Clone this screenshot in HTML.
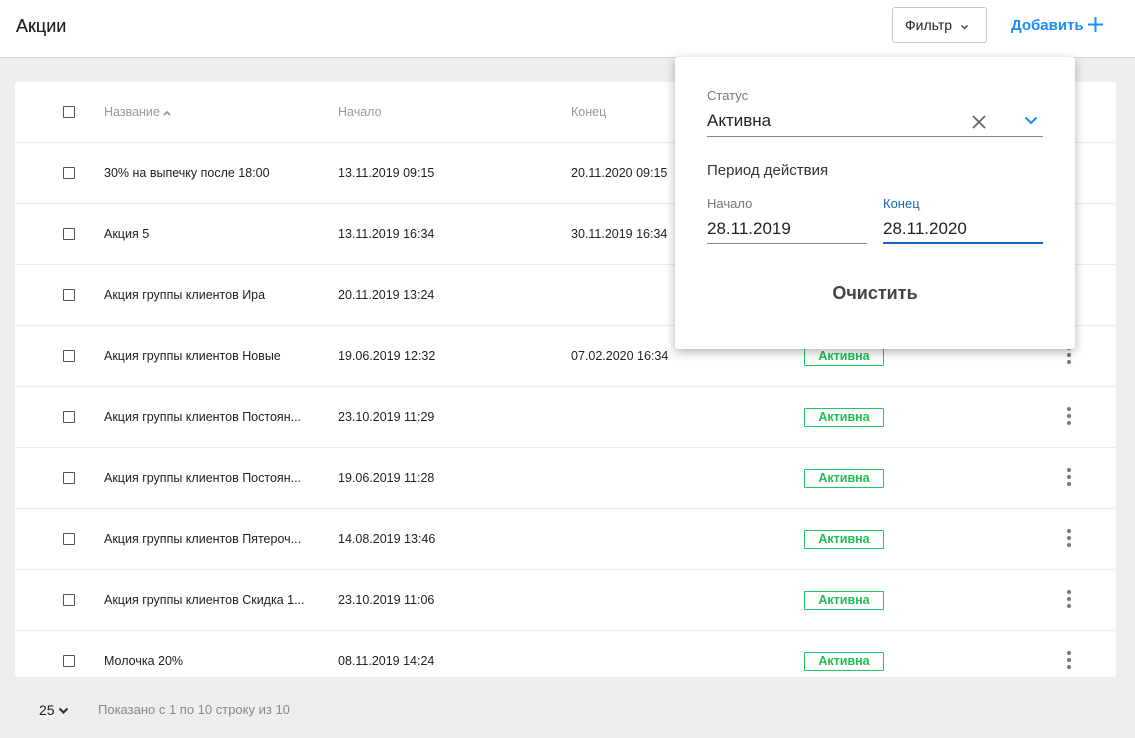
<!DOCTYPE html>
<html><head><meta charset="utf-8"><style>
*{box-sizing:border-box;margin:0;padding:0}
body{width:1135px;height:738px;overflow:hidden;background:#eeeeee;font-family:"Liberation Sans",sans-serif;color:#222;position:relative}
.hdr{position:absolute;left:0;top:0;width:1135px;height:58px;background:#fff;border-bottom:1px solid #d6d6d6}
.hdr h1{position:absolute;left:16px;top:16px;font-size:18px;font-weight:normal;color:#222;text-shadow:0 0 .4px #222}
.fbtn{position:absolute;left:892px;top:7px;width:95px;height:36px;border:1px solid #c8c8c8;border-radius:3px;font-size:14px;line-height:34px;padding-left:12px;color:#222}
.add{position:absolute;left:1011px;top:17px;font-size:15px;color:#1a8cff;font-weight:bold}
.card{position:absolute;left:15px;top:82px;width:1101px;height:595px;background:#fff;border-radius:3px;overflow:hidden}
.row{position:absolute;left:0;width:1101px;height:61px;border-bottom:1px solid #ececec;font-size:12.5px}
.row span{position:absolute;top:23px}
.cb{position:absolute;left:48px;top:24px;width:12px;height:12px;border:1px solid #555;border-radius:1px}
.badge{position:absolute;left:789px;top:21px;width:80px;height:19px;border:1px solid #22c55e;color:#1fbf55;font-size:12.5px;font-weight:bold;text-align:center;line-height:17px;border-radius:1px}
.dots{position:absolute;left:1052px;top:20px;width:4px}
.dots i{display:block;width:4px;height:4px;border-radius:2px;background:#777;margin-bottom:3px}
.th span{color:#999}
.pop{position:absolute;left:675px;top:57px;width:400px;height:292px;background:#fff;border-radius:3px;box-shadow:0 3px 10px rgba(0,0,0,.3)}
.pop .t{position:absolute;font-size:13px;color:#777}
.foot{position:absolute;top:702px;font-size:13px}
</style></head><body>
<div class="hdr"><h1>Акции</h1>
<div class="fbtn">Фильтр <svg width="9" height="6" style="margin-left:4px" viewBox="0 0 9 6"><path d="M1.5 1.5l3 3 3-3" stroke="#333" stroke-width="1.3" fill="none"/></svg></div>
<div class="add">Добавить <svg width="15" height="15" viewBox="0 0 15 15" style="vertical-align:-2px"><path d="M7.5 0v15M0 7.5h15" stroke="#1a8cff" stroke-width="2"/></svg></div>
</div>
<div class="card">
<div class="row th" style="top:0"><div class="cb"></div><span style="left:89px">Название <svg width="8" height="6" viewBox="0 0 8 6"><path d="M1 5l3-3 3 3" stroke="#999" stroke-width="1.8" fill="none"/></svg></span><span style="left:323px">Начало</span><span style="left:556px">Конец</span></div>
<div class="row" style="top:61px"><div class="cb"></div><span style="left:89px">30% на выпечку после 18:00</span><span style="left:323px">13.11.2019 09:15</span><span style="left:556px">20.11.2020 09:15</span></div>
<div class="row" style="top:122px"><div class="cb"></div><span style="left:89px">Акция 5</span><span style="left:323px">13.11.2019 16:34</span><span style="left:556px">30.11.2019 16:34</span></div>
<div class="row" style="top:183px"><div class="cb"></div><span style="left:89px">Акция группы клиентов Ира</span><span style="left:323px">20.11.2019 13:24</span></div>
<div class="row" style="top:244px"><div class="cb"></div><span style="left:89px">Акция группы клиентов Новые</span><span style="left:323px">19.06.2019 12:32</span><span style="left:556px">07.02.2020 16:34</span><div class="badge">Активна</div><div class="dots"><i></i><i></i><i></i></div></div>
<div class="row" style="top:305px"><div class="cb"></div><span style="left:89px">Акция группы клиентов Постоян...</span><span style="left:323px">23.10.2019 11:29</span><div class="badge">Активна</div><div class="dots"><i></i><i></i><i></i></div></div>
<div class="row" style="top:366px"><div class="cb"></div><span style="left:89px">Акция группы клиентов Постоян...</span><span style="left:323px">19.06.2019 11:28</span><div class="badge">Активна</div><div class="dots"><i></i><i></i><i></i></div></div>
<div class="row" style="top:427px"><div class="cb"></div><span style="left:89px">Акция группы клиентов Пятероч...</span><span style="left:323px">14.08.2019 13:46</span><div class="badge">Активна</div><div class="dots"><i></i><i></i><i></i></div></div>
<div class="row" style="top:488px"><div class="cb"></div><span style="left:89px">Акция группы клиентов Скидка 1...</span><span style="left:323px">23.10.2019 11:06</span><div class="badge">Активна</div><div class="dots"><i></i><i></i><i></i></div></div>
<div class="row" style="top:549px;border:0"><div class="cb"></div><span style="left:89px">Молочка 20%</span><span style="left:323px">08.11.2019 14:24</span><div class="badge">Активна</div><div class="dots"><i></i><i></i><i></i></div></div>
</div>
<div class="foot" style="left:39px;font-size:14px">25 <svg width="11" height="8" viewBox="0 0 11 8"><path d="M1.5 1.5l4 4 4-4" stroke="#333" stroke-width="2.2" fill="none"/></svg></div>
<div class="foot" style="left:98px;color:#888">Показано с 1 по 10 строку из 10</div>
<div class="pop">
<div class="t" style="left:32px;top:31px">Статус</div>
<div style="position:absolute;left:32px;top:54px;font-size:17px">Активна</div>
<svg style="position:absolute;left:297px;top:58px" width="14" height="14" viewBox="0 0 14 14"><path d="M1 1l12 12M13 1L1 13" stroke="#666" stroke-width="1.8"/></svg>
<svg style="position:absolute;left:349px;top:59px" width="14" height="9" viewBox="0 0 14 9"><path d="M1.5 1.5l5.5 5.5 5.5-5.5" stroke="#1a8cff" stroke-width="2" fill="none"/></svg>
<div style="position:absolute;left:32px;top:79px;width:336px;height:1px;background:#888"></div>
<div style="position:absolute;left:32px;top:105px;font-size:15px;color:#333">Период действия</div>
<div class="t" style="left:32px;top:139px">Начало</div>
<div class="t" style="left:208px;top:139px;color:#1565c0">Конец</div>
<div style="position:absolute;left:32px;top:162px;font-size:17px">28.11.2019</div>
<div style="position:absolute;left:208px;top:162px;font-size:17px">28.11.2020</div>
<div style="position:absolute;left:32px;top:186px;width:160px;height:1px;background:#888"></div>
<div style="position:absolute;left:208px;top:185px;width:160px;height:2px;background:#1565c0"></div>
<div style="position:absolute;left:0;width:400px;top:226px;text-align:center;font-size:18px;font-weight:bold;color:#444">Очистить</div>
</div>
</body></html>
